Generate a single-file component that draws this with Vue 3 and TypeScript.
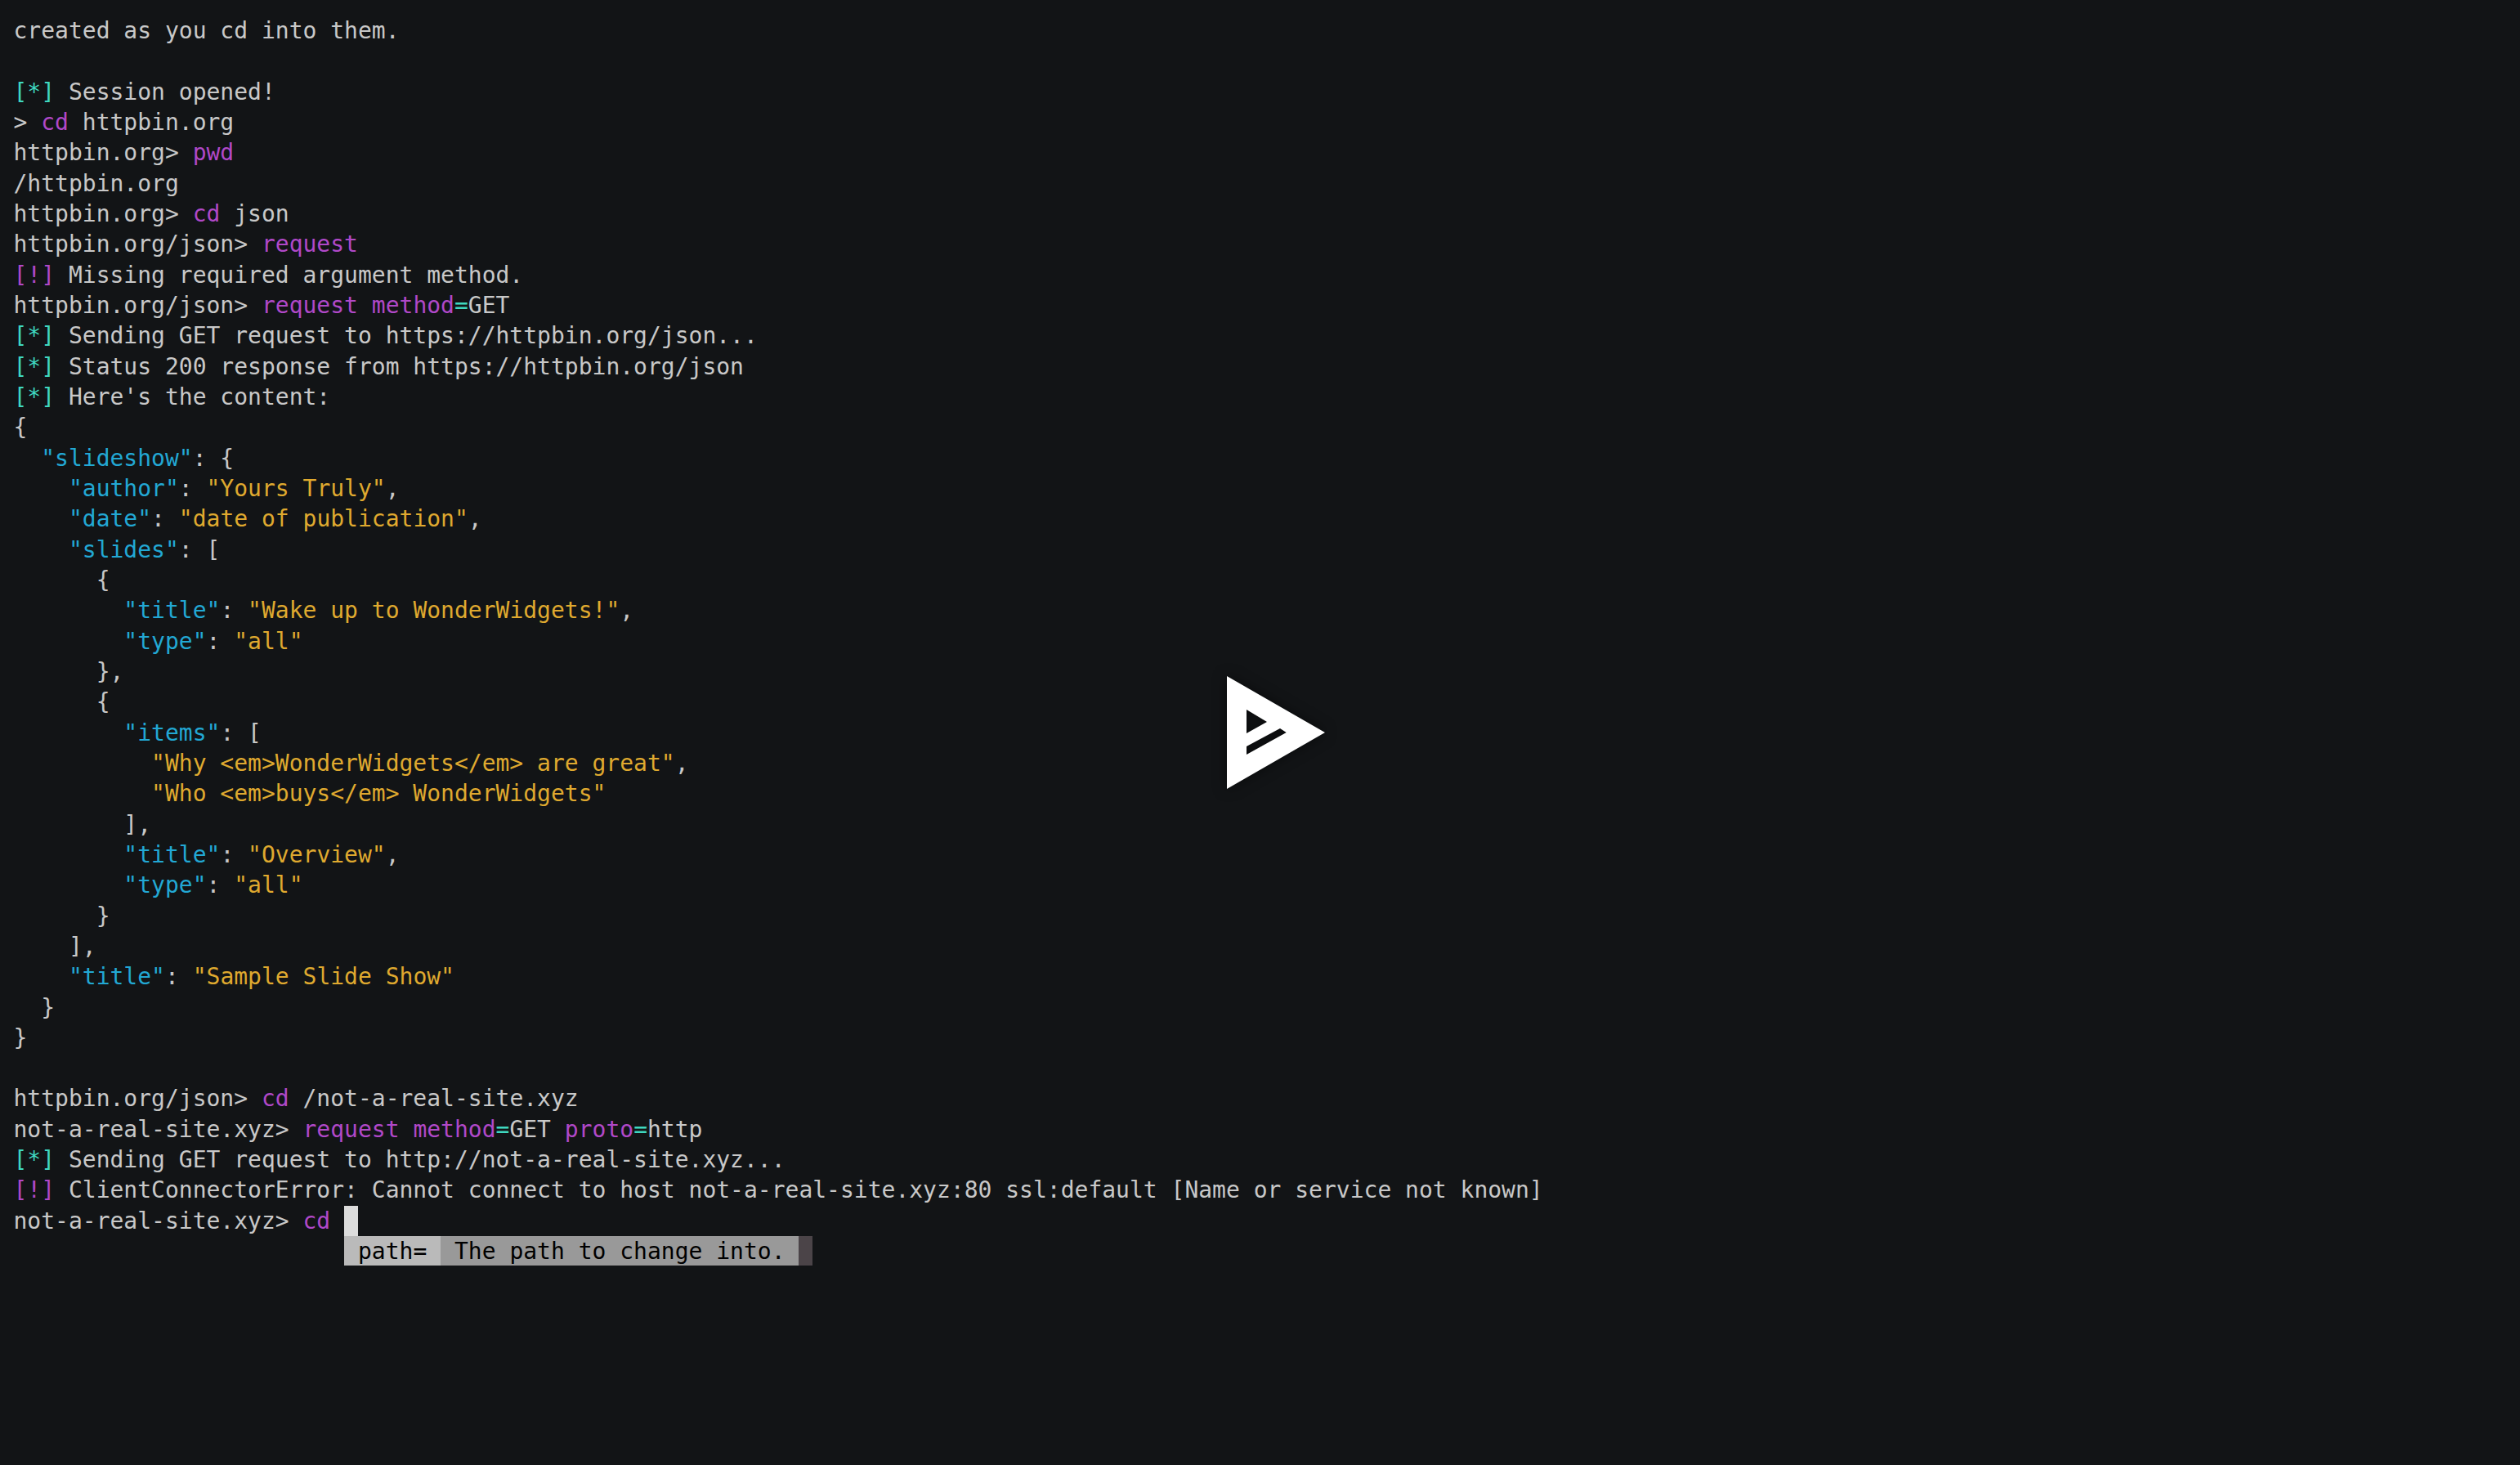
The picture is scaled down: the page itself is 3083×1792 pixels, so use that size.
<script setup lang="ts">
type Seg = [string, string];
const t = (s: string): Seg => ['', s];
const p = (s: string): Seg => ['purple', s];
const g = (s: string): Seg => ['teal', s];
const k = (s: string): Seg => ['cyan', s];
const y = (s: string): Seg => ['yellow', s];
const info: Seg = g('[*]');
const err: Seg = p('[!]');
const lines: Seg[][] = [
  [t('created as you cd into them.')],
  [],
  [info, t(' Session opened!')],
  [t('> '), p('cd'), t(' httpbin.org')],
  [t('httpbin.org> '), p('pwd')],
  [t('/httpbin.org')],
  [t('httpbin.org> '), p('cd'), t(' json')],
  [t('httpbin.org/json> '), p('request')],
  [err, t(' Missing required argument method.')],
  [t('httpbin.org/json> '), p('request'), t(' '), p('method'), g('='), t('GET')],
  [info, t(' Sending GET request to https://httpbin.org/json...')],
  [info, t(' Status 200 response from https://httpbin.org/json')],
  [info, t(" Here's the content:")],
  [t('{')],
  [t('  '), k('"slideshow"'), t(': {')],
  [t('    '), k('"author"'), t(': '), y('"Yours Truly"'), t(',')],
  [t('    '), k('"date"'), t(': '), y('"date of publication"'), t(',')],
  [t('    '), k('"slides"'), t(': [')],
  [t('      {')],
  [t('        '), k('"title"'), t(': '), y('"Wake up to WonderWidgets!"'), t(',')],
  [t('        '), k('"type"'), t(': '), y('"all"')],
  [t('      },')],
  [t('      {')],
  [t('        '), k('"items"'), t(': [')],
  [t('          '), y('"Why <em>WonderWidgets</em> are great"'), t(',')],
  [t('          '), y('"Who <em>buys</em> WonderWidgets"')],
  [t('        ],')],
  [t('        '), k('"title"'), t(': '), y('"Overview"'), t(',')],
  [t('        '), k('"type"'), t(': '), y('"all"')],
  [t('      }')],
  [t('    ],')],
  [t('    '), k('"title"'), t(': '), y('"Sample Slide Show"')],
  [t('  }')],
  [t('}')],
  [],
  [t('httpbin.org/json> '), p('cd'), t(' /not-a-real-site.xyz')],
  [t('not-a-real-site.xyz> '), p('request'), t(' '), p('method'), g('='), t('GET '), p('proto'), g('='), t('http')],
  [info, t(' Sending GET request to http://not-a-real-site.xyz...')],
  [err, t(' ClientConnectorError: Cannot connect to host not-a-real-site.xyz:80 ssl:default [Name or service not known]')],
  [t('not-a-real-site.xyz> '), p('cd'), t(' ')],
];
const promptLine = lines.length - 1;
</script>

<template>
  <div class="screen">
    <div class="term">
      <div v-for="(line, i) in lines" :key="i" class="row">
        <span v-for="(seg, j) in line" :key="j" :class="seg[0]">{{ seg[1] }}</span>
        <span v-if="i === promptLine" class="cursor-cell">
          <span class="cursor"></span>
          <span class="popup">
            <span class="name">{{ ' path= ' }}</span>
            <span class="desc">{{ ' The path to change into. ' }}</span>
            <span class="bar">{{ ' ' }}</span>
          </span>
        </span>
      </div>
    </div>
    <svg class="logo" viewBox="0 0 120 138" width="120" height="138">
      <path fill="#fff" fill-rule="evenodd" d="M0 0 L120 69 L0 138 Z M24 41 L24 70 L49 56 Z M24 96 L24 86 L65 64 L72.7 69 Z" />
    </svg>
  </div>
</template>

<style scoped>
.screen {
  position: relative;
  width: 3083px;
  height: 1792px;
  overflow: hidden;
  background: #121416;
  color: #c8c8c8;
  font-family: "DejaVu Sans Mono", monospace;
  font-size: 28px;
}
.term {
  padding: 19px 0 0 16.5px;
  display: flex;
  flex-direction: column;
}
.row {
  height: 37.33px;
  line-height: 37.33px;
  white-space: pre;
}
.purple { color: #b048c8; }
.teal { color: #3fd8c0; }
.cyan { color: #22a8d4; }
.yellow { color: #dfa92f; }
.cursor-cell {
  position: relative;
  display: inline-block;
  width: 16.86px;
  height: 37.33px;
  vertical-align: top;
}
.cursor {
  display: block;
  width: 16.86px;
  height: 37.33px;
  background: #dcdcdc;
}
.popup {
  position: absolute;
  left: 0;
  top: 37px;
  display: flex;
  height: 36.5px;
  line-height: 37.33px;
  color: #000;
  white-space: pre;
}
.name { background: #bababa; }
.desc { background: #999999; }
.bar { background: #4b4448; }
.logo {
  position: absolute;
  left: 1501px;
  top: 827px;
  filter: drop-shadow(0 0 8px rgba(0, 0, 0, 0.5));
}
</style>
